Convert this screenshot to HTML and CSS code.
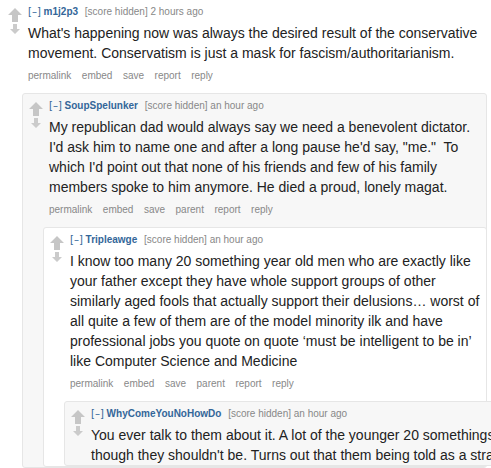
FILE: index.html
```html
<!DOCTYPE html>
<html>
<head>
<meta charset="utf-8">
<link rel="stylesheet" href="styles.css">
</head>
<body>
<div class="comment top">
  <div class="row">
    <div class="midcol">
      <svg class="up" width="14" height="14" viewBox="0 0 14 14"><path d="M7 0 L14 7 L10 7 L10 14 L4 14 L4 7 L0 7 Z"/></svg>
      <svg class="down" width="10" height="10" viewBox="0 0 10 10"><path d="M3 0 L7 0 L7 5 L10 5 L5 10 L0 5 L3 5 Z"/></svg>
    </div>
    <div class="entry">
      <p class="tagline"><a class="expand">[–]</a> <a class="author">m1j2p3</a> <span class="score">[score hidden] 2 hours ago</span></p>
      <div class="md">What's happening now was always the desired result of the conservative movement. Conservatism is just a mask for fascism/authoritarianism.</div>
      <ul class="buttons"><li>permalink</li><li>embed</li><li>save</li><li>report</li><li>reply</li></ul>
    </div>
  </div>
  <div class="child">
    <div class="comment grey">
      <div class="row">
        <div class="midcol">
          <svg class="up" width="14" height="14" viewBox="0 0 14 14"><path d="M7 0 L14 7 L10 7 L10 14 L4 14 L4 7 L0 7 Z"/></svg>
          <svg class="down" width="10" height="10" viewBox="0 0 10 10"><path d="M3 0 L7 0 L7 5 L10 5 L5 10 L0 5 L3 5 Z"/></svg>
        </div>
        <div class="entry">
          <p class="tagline"><a class="expand">[–]</a> <a class="author">SoupSpelunker</a> <span class="score">[score hidden] an hour ago</span></p>
          <div class="md">My republican dad would always say we need a benevolent dictator. I'd ask him to name one and after a long pause he'd say, "me."&nbsp; To which I'd point out that none of his friends and few of his family members spoke to him anymore. He died a proud, lonely magat.</div>
          <ul class="buttons"><li>permalink</li><li>embed</li><li>save</li><li>parent</li><li>report</li><li>reply</li></ul>
        </div>
      </div>
      <div class="child">
        <div class="comment white">
          <div class="row">
            <div class="midcol">
              <svg class="up" width="14" height="14" viewBox="0 0 14 14"><path d="M7 0 L14 7 L10 7 L10 14 L4 14 L4 7 L0 7 Z"/></svg>
              <svg class="down" width="10" height="10" viewBox="0 0 10 10"><path d="M3 0 L7 0 L7 5 L10 5 L5 10 L0 5 L3 5 Z"/></svg>
            </div>
            <div class="entry">
              <p class="tagline"><a class="expand">[–]</a> <a class="author">Tripleawge</a> <span class="score">[score hidden] an hour ago</span></p>
              <div class="md">I know too many 20 something year old men who are exactly like your father except they have whole support groups of other similarly aged fools that actually support their delusions… worst of all quite a few of them are of the model minority ilk and have professional jobs you quote on quote ‘must be intelligent to be in’ like Computer Science and Medicine</div>
              <ul class="buttons"><li>permalink</li><li>embed</li><li>save</li><li>parent</li><li>report</li><li>reply</li></ul>
            </div>
          </div>
          <div class="child">
            <div class="comment grey wide">
              <div class="row">
                <div class="midcol">
                  <svg class="up" width="14" height="14" viewBox="0 0 14 14"><path d="M7 0 L14 7 L10 7 L10 14 L4 14 L4 7 L0 7 Z"/></svg>
                  <svg class="down" width="10" height="10" viewBox="0 0 10 10"><path d="M3 0 L7 0 L7 5 L10 5 L5 10 L0 5 L3 5 Z"/></svg>
                </div>
                <div class="entry">
                  <p class="tagline"><a class="expand">[–]</a> <a class="author">WhyComeYouNoHowDo</a> <span class="score">[score hidden] an hour ago</span></p>
                  <div class="md">You ever talk to them about it. A lot of the younger 20 somethings I know are conservative even<br>though they shouldn't be. Turns out that them being told as a straight line to success.</div>
                </div>
              </div>
            </div>
          </div>
        </div>
      </div>
    </div>
  </div>
</div>
</body>
</html>
```
FILE: styles.css
```css
html, body {
  margin: 0;
  padding: 0;
  background: #fff;
  overflow: hidden;
  height: 468px;
}
body {
  font-family: "Liberation Sans", Arial, sans-serif;
  color: #222;
}
.comment {
  border: 1px solid #e6e6e6;
  border-radius: 3px;
  padding: 0 0 0 5px;
}
.comment.top {
  border-color: transparent;
  width: 479px;
  margin: -1px 0 0 1px;
}
.comment.grey { background: #f7f7f7; }
.comment.white { background: #fff; }
.comment.wide { width: 700px; }
.row {
  display: flex;
}
.midcol {
  width: 21px;
  flex: none;
  display: flex;
  flex-direction: column;
  padding-top: 8px;
}
.midcol svg { fill: #c6c6c6; display: block; }
.midcol .up { margin-left: 1px; }
.midcol .down { margin-left: 3px; margin-top: 2px; fill: #cbcbcb; }
.entry {
  flex: 1;
  min-width: 0;
}
.tagline {
  margin: 6px 0 0;
  font-size: 10px;
  line-height: 12px;
  color: #888;
  white-space: nowrap;
}
.expand { color: #369; font-family: "DejaVu Sans", Verdana, sans-serif; font-size: 10px; }
.author { color: #369; font-weight: bold; margin-right: 4px; }
.md {
  font-size: 14px;
  line-height: 20px;
  margin-top: 5px;
}
.buttons {
  list-style: none;
  margin: 7px 0 0;
  padding: 0 0 11px;
  display: flex;
  gap: 10.5px;
  font-size: 10px;
  line-height: 12px;
  color: #888;
}
.child {
  margin-left: 15px;
  margin-right: -1px;
}
```
